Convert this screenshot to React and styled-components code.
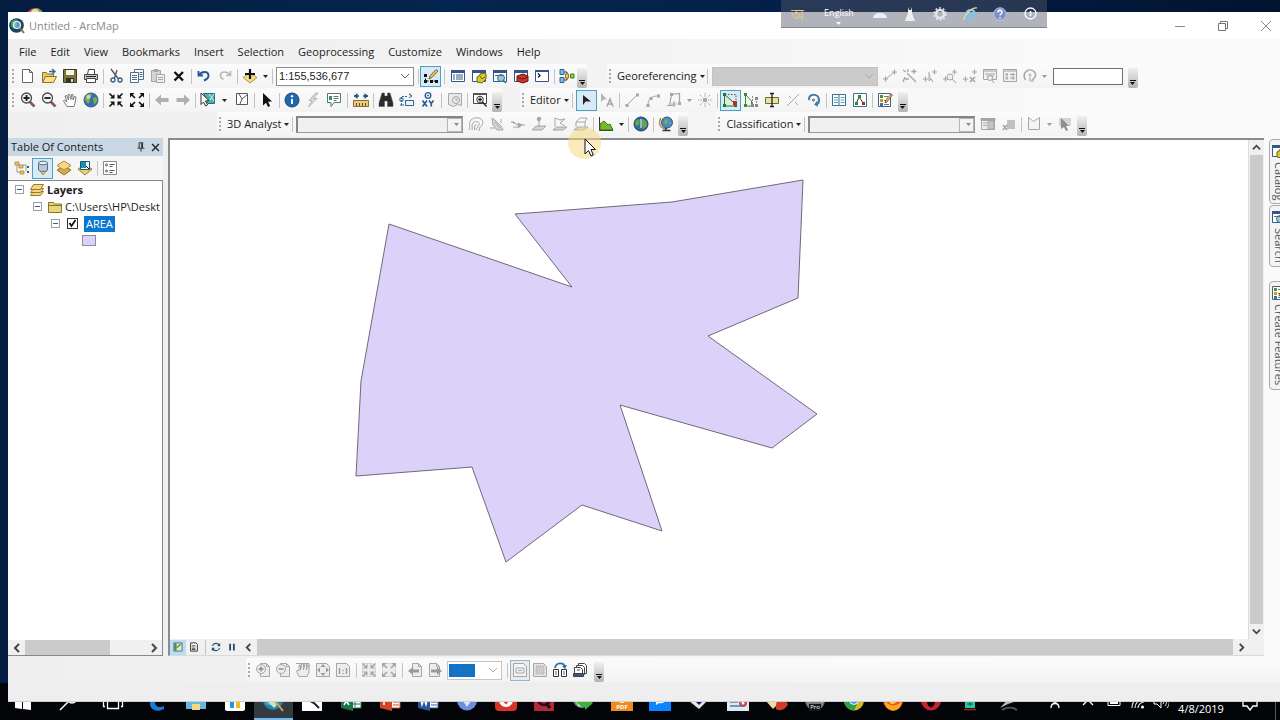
import React, { useState } from 'react';
import styled, { createGlobalStyle, css } from 'styled-components';

const GlobalStyle = createGlobalStyle`
    *, *::before, *::after {
        box-sizing: border-box;
    }

    body {
        margin: 0;
        overflow: hidden;
        font-family: "Open Sans", "Noto Sans", sans-serif;
        font-size: 11px;
        line-height: 16px;
        color: #1c1c1c;
    }

    button, select, input {
        font: inherit;
        color: inherit;
    }

    svg {
        display: block;
        flex: none;
    }
`;

/* ---------- icons ---------- */

const G = '#a6a6a6';
const L = '#d4d4d4';

const page = (c = '#666', fill = '#fff') => <path d="M2.5 1.5h7l3 3v10h-10zM9.5 1.5v3h3" fill={fill} stroke={c} />;
const grayPage = <path d="M5.5 1.5h6l3 3v10h-9zM11.5 1.5v3h3" fill="#ececec" stroke={G} />;
const arrowsIn = (c) => (
    <g stroke={c} fill={c} strokeWidth="1.6">
        <path d="M1.5 1.5l3 3M14.5 1.5l-3 3M1.5 14.5l3-3M14.5 14.5l-3-3" />
        <path d="M6.5 2V6.5H2zM9.5 2V6.5H14zM6.5 14V9.5H2zM9.5 14V9.5H14z" stroke="none" />
    </g>
);
const arrowsOut = (c) => (
    <g stroke={c} fill={c} strokeWidth="1.6">
        <path d="M6 6L3 3M10 6l3-3M6 10l-3 3M10 10l3 3" />
        <path d="M1 1h4.500L1 5.500zM15 1v4.500L10.500 1zM1 15v-4.500L5.500 15zM15 15h-4.500l4.500-4.500z" stroke="none" />
    </g>
);
const lens = (sign) => (
    <g fill="none">
        <path d="M9.500 9.500l5 5" stroke="#8a5850" strokeWidth="2.600" />
        <circle cx="6.500" cy="6" r="5" fill="#eef3f7" stroke="#4c4c4c" strokeWidth="1.300" />
        <path d={sign === '+' ? 'M6.500 3v6M3.500 6h6' : 'M3.500 6h6'} stroke="#222" strokeWidth="1.900" />
    </g>
);
const win = (c = '#35568c') => (
    <g>
        <path d="M1.500 2.500h13v11h-13z" fill="#fff" stroke={c} />
        <path d="M1 2h14v3H1z" fill={c} />
    </g>
);
const globe = (
    <g>
        <circle cx="8" cy="8" r="7" fill="#3470b0" stroke="#35587f" />
        <path d="M3 4c2-2 4-2.500 6-2l-1 3-2 1 1 3-2 3-2-3-1.500-1zM10 6l3-1 1.500 3-1.500 3-2 1.500z" fill="#7fae4e" />
        <circle cx="5.500" cy="5" r="2.200" fill="#fff" opacity=".55" />
    </g>
);
const plusMarks = (
    <path d="M1 11h5M3.500 8.500v5M10 4h5M12.500 1.500v5" stroke={G} strokeWidth="1.200" fill="none" />
);
const fence = (c = '#fff', s = '#9b7a2b') => <path d="M8 5l7 4-7 6-7-6z" fill={c} stroke={s} />;

const icons = {
    newDoc: page(),
    open: (
        <g>
            <path d="M1.500 14.500v-10h4l1 1.500h6v8z" fill="#e8c95f" stroke="#8f7426" />
            <path d="M1.500 14.500l3-6h11l-3 6z" fill="#f7e28c" stroke="#8f7426" />
            <path d="M8 3.500h5M11 1l3 2.500L11 6" stroke="#2e6aa0" fill="none" strokeWidth="1.400" />
        </g>
    ),
    save: (
        <g>
            <path d="M1.500 1.500h13v13h-13z" fill="#7d7436" stroke="#3b3a28" />
            <path d="M4 2h8v5H4z" fill="#f4f4ee" />
            <path d="M4 10h8v4.500H4z" fill="#33332b" />
            <path d="M9 11h2v3H9z" fill="#ddd" />
        </g>
    ),
    print: (
        <g stroke="#444">
            <path d="M4.500 6.500l1-5h6v5" fill="#fff" />
            <path d="M1.500 6.500h13v5h-13z" fill="#c9c9c9" />
            <path d="M3.500 10.500h9v4h-9z" fill="#fff" />
            <path d="M3 8.500h10" stroke="#222" />
        </g>
    ),
    cut: (
        <g fill="none" stroke="#555" strokeWidth="1.300">
            <path d="M3 1l7 9.500M9 2L6.500 10" />
            <circle cx="5" cy="12" r="2" stroke="#2f5d8e" />
            <circle cx="12" cy="12" r="2" stroke="#2f5d8e" />
        </g>
    ),
    copy: (
        <g fill="#fff" stroke="#4e6f8c">
            <path d="M5.500 1.500h9v10h-9z" />
            <path d="M1.500 4.500h8v10h-8z" />
            <path d="M3 7.500h5M3 9.500h5M3 11.500h5M10.500 4.500h3M10.500 6.500h3M10.500 8.500h3" />
        </g>
    ),
    paste: (
        <g stroke={G}>
            <path d="M1.500 2.500h9v11h-9z" fill={L} />
            <path d="M4 1.500h4v2H4z" fill={G} />
            <path d="M6.500 6.500h8v8h-8z" fill="#eee" />
            <path d="M8 9.500h5M8 11.500h5" />
        </g>
    ),
    remove: <path d="M3.500 4l8.500 8.500M12 4l-8.500 8.500" stroke="#111" strokeWidth="2.400" />,
    undo: <path d="M2.500 3v4.500H7M3 7c3-4 9-4 9.500 0 .3 2.500-2 4.500-4.500 5.500" fill="none" stroke="#235a94" strokeWidth="1.900" />,
    redo: <path d="M13.500 3v4.500H9M13 7c-3-4-9-4-9.500 0-.3 2 1 3.500 3 4.500" fill="none" stroke="#b9b9b9" strokeWidth="1.700" />,
    addData: (
        <g>
            <path d="M8 5l7 4.500-7 5.500-7-5.500z" fill="#f4dc86" stroke="#b5913a" />
            <path d="M8 1v10M3 6h10" stroke="#111" strokeWidth="2.200" />
        </g>
    ),
    editSnap: (
        <g>
            <path d="M2.500 7v6h11" stroke="#111" fill="none" strokeDasharray="2 1.500" />
            <path d="M1 6h3v3H1zM1 12h3v3H1zM7 12h3v3H7zM12 12h3v3h-3z" fill="#111" />
            <path d="M6 11l1-3 6-6.500L15 3 9 9.500z" fill="#ecc45c" stroke="#5b4718" strokeWidth=".8" />
        </g>
    ),
    toc: <g>{win()}<path d="M3 7h2M3 9h2M3 11h2M6 7h7M6 9h7M6 11h7" stroke="#35568c" /></g>,
    catalog: <g>{win()}<path d="M6 9l3-2v-1l4-1 2 1v5l-4 4-5-1z" fill="#dcc92e" stroke="#6b6212" /><path d="M9 8l2 3 3-2" stroke="#6b6212" /></g>,
    search: <g>{win()}<circle cx="9" cy="10" r="3.500" fill="#9fc6d8" stroke="#2e7594" /><path d="M3 7.500h9" stroke="#666" /><path d="M11 12l3 3" stroke="#2e7594" strokeWidth="1.500" /></g>,
    toolbox: <g>{win()}<path d="M4 8l6-2 5 2v5l-5 2-6-2z" fill="#c83628" stroke="#6d1610" /><path d="M4 9.500l6 1.500 5-2" stroke="#6d1610" fill="none" /></g>,
    python: <g><path d="M1.500 2.500h13v11h-13z" fill="#fff" stroke="#35568c" /><path d="M1 2h14v2H1z" fill="#35568c" /><path d="M4 5.500l2 2-2 2" stroke="#111" strokeWidth="1.200" fill="none" /></g>,
    model: (
        <g stroke="#333">
            <path d="M5 4h3v4h2M5 12h3V8" fill="none" />
            <path d="M1 1.500h4v5H1zM1 9.500h4v5H1z" fill="#7cbbe8" stroke="#2a6596" />
            <path d="M6.500 6h3v4h-3z" fill="#f4d23e" stroke="#8d7518" />
            <path d="M11.500 6h3.500v4h-3.500z" fill="#8fd05b" stroke="#3f7a1b" />
        </g>
    ),
    zoomIn: lens('+'),
    zoomOut: lens('-'),
    pan: <path d="M5 14.500L1.500 9l1-1L5 10 3 4l1.500-.5L6.500 8 6 2.500h1.500L9 7.500 9.500 2.500H11V8l1.500-3.500 1.500.5-1 6-1 3.500z" fill="#fff" stroke="#6d6d6d" strokeWidth=".9" />,
    globe,
    fixedIn: arrowsIn('#111'),
    fixedOut: arrowsOut('#111'),
    back: <path d="M1 8l6-5.500v3.500h7.500v4H7v3.500z" fill="#b0b0b0" />,
    forward: <path d="M15 8L9 2.500v3.500H1.500v4H9v3.500z" fill="#b0b0b0" />,
    selectFeatures: (
        <g>
            <path d="M3.500 1.500h11v10H8z" fill="#4bb3ad" stroke="#2b6a78" />
            <path d="M9 2l5 7M14 2l-4 6" stroke="#d9f2ef" />
            <path d="M1 1l8 7.500-3.500.5 2 4-2 1-2-4L1 12.500z" fill="#fff" stroke="#333" />
        </g>
    ),
    clearSel: <path d="M2.500 1.500h11v11h-11zM5 2l3 5-2 5M8 7l5-4" fill="#fff" stroke="#555" />,
    pointer: <path d="M4 1l9 8.500-4 .3 2.200 4.200-2.200 1-2-4.300L4 13.500z" fill="#111" />,
    identify: (
        <g>
            <circle cx="8" cy="8" r="7" fill="#1f66ae" stroke="#163f73" />
            <path d="M8 7v5" stroke="#fff" strokeWidth="2" />
            <circle cx="8" cy="4.300" r="1.200" fill="#fff" />
        </g>
    ),
    bolt: <path d="M10.500 1L4 8.500h3L3.500 15 12 6.500H8.500L13 1z" fill="#ddd" stroke={G} strokeWidth=".8" />,
    popup: (
        <g>
            <path d="M1.500 1.500h13v9H8l-3 4v-4H1.500z" fill="#fff" stroke="#57796c" />
            <path d="M3 4h3v4H3z" fill="#3d8a7c" />
            <path d="M7.500 4.500h5M7.500 6.500h5M7.500 8.500h3" stroke="#57796c" />
        </g>
    ),
    measure: (
        <g>
            <path d="M1 4h5M10 4h5" stroke="#1c4f86" strokeWidth="1.600" />
            <path d="M1 4l3.500-3v6zM15 4l-3.500-3v6z" fill="#1c4f86" />
            <path d="M.5 8.500h15v6H.5z" fill="#eccb86" stroke="#8f6c2f" />
            <path d="M3.500 14v-3M6.500 14v-3M9.500 14v-3M12.500 14v-3" stroke="#6b4c18" />
        </g>
    ),
    find: <path d="M4 1h2.500v3h3V1H12l3 10v3.500H9.500V9h-3v5.500H1V11zM3 10.500h2M11 10.500h2" fill="#2a2a2a" stroke="#555" strokeWidth=".5" />,
    route: (
        <g fill="none" stroke="#2b6a91">
            <path d="M2.500 13V4.500H8M11 1.500v3" strokeDasharray="2 1" />
            <path d="M10 2l3 2-3 2M1 6h3v3H1z" />
            <path d="M6.500 8.500h8v5h-8z" fill="#eaf3f8" />
            <path d="M1 13h4" />
        </g>
    ),
    xy: (
        <g fill="none" stroke="#1f5c93">
            <circle cx="8" cy="3.500" r="2.800" strokeWidth="1.300" />
            <circle cx="8" cy="3.500" r=".6" />
            <path d="M2.500 8.500l4.500 6M7 8.500l-4.500 6M9 8.500l2.300 3 2.200-3M11.300 11.500v3" strokeWidth="1.600" />
        </g>
    ),
    timeSlider: <g stroke={G} fill="#e8e8e8"><path d="M1.500 1.500h13v12l-4-1-4 2-5-2z" /><circle cx="9" cy="8" r="3.500" /><path d="M9 6v2h2" fill="none" /></g>,
    viewer: (
        <g>
            <path d="M1.500 1.500h13v10h-13z" fill="#fff" stroke="#444" />
            <path d="M1 1h14v2H1z" fill="#555" />
            <circle cx="8" cy="7.500" r="3.300" fill="#fff" stroke="#333" />
            <path d="M8 5.500v4M6 7.500h4M10.500 10l4 4.500" stroke="#222" strokeWidth="1.300" />
        </g>
    ),
    editTool: <path d="M5 3v10l2.500-3.500H13z" fill="#222" />,
    editAnno: <g><path d="M2 1v9l2.500-2.500H8z" fill="#b5b5b5" /><path d="M8 14.500L11 7l3 7.500M9 12h4" fill="none" stroke={G} strokeWidth="1.500" /></g>,
    line: <g stroke={G} fill={G}><path d="M3 13L13 3" /><path d="M1.500 12h3v3h-3zM12 1.500h3v3h-3z" stroke="none" /></g>,
    arc: <g stroke={G} fill="none"><path d="M3 13c0-6 4-9 9-9" /><path d="M1.500 12h3v3h-3zM4.500 5h3v3h-3zM12 2.500h3v3h-3z" fill={G} stroke="none" /></g>,
    trace: <g stroke={G} fill="none"><path d="M3.500 13.500l2-11 8-1v9M1 13.500h7M8 9v6M5 12h6" strokeWidth="1.200" /><path d="M12 10h3v3h-3zM4 1h3v3H4z" fill={G} stroke="none" /></g>,
    point: <g stroke={G}><path d="M8 1v4M8 11v4M1 8h4M11 8h4M3 3l2.500 2.500M13 3l-2.500 2.500M3 13l2.500-2.500M13 13l-2.500-2.500" strokeDasharray="1.500 .7" /><path d="M6.500 6.500h3v3h-3z" fill={G} /></g>,
    vertices: (
        <g>
            <path d="M2.500 3v11h11V12L3 3z" fill="#dcefdf" stroke="#2d6b35" />
            <path d="M3 2.500h11v9" fill="none" stroke="#555" strokeDasharray="1.500 1.500" />
            <path d="M1 1h3v3H1zM1 12h3v3H1zM12 12h3v3h-3z" fill="#1f7a2c" />
            <path d="M11 9h4v4h-4z" fill="#c5261d" />
        </g>
    ),
    reshape: (
        <g>
            <path d="M2.500 3v11h6V9L3 3" fill="none" stroke="#3b8b3f" />
            <path d="M9.500 4v10M13.500 6v8" stroke="#888" strokeDasharray="2 1" />
            <path d="M1 1h3v3H1zM1 12h3v3H1z" fill="#3b8b3f" />
            <path d="M8 12h3v3H8zM12 5h3v3h-3zM12 12h3v3h-3z" fill="#888" />
        </g>
    ),
    cutPoly: <g><path d="M1.500 5.500h13v6h-13z" fill="#eae59a" stroke="#6d6a33" /><path d="M8 1v14M6 1.500h4M6 14.500h4" stroke="#222" strokeWidth="1.300" /></g>,
    split: <path d="M2 14L14 2M4 4l2 2M10 10l3 3" stroke={G} fill="none" />,
    rotate: <g fill="none" stroke="#3f7fae"><path d="M3 8c-1-7 10-7 10 0 0 2-1 4-3 4.500" strokeWidth="2.200" /><path d="M11 9l-3 3.500 4 2.500" fill="#3f7fae" stroke="none" /><circle cx="7.500" cy="8" r="1" stroke="#555" /></g>,
    attributes: (
        <g fill="none" stroke="#3b7096">
            <path d="M1.500 2.500h13v11h-13z" fill="#fff" />
            <path d="M8 3v10" />
            <path d="M3 5.500h4M3 8h4M3 10.500h4M9.500 5.500h4M9.500 8h4M9.500 10.500h4" stroke="#5d9cc4" />
        </g>
    ),
    sketch: <g><path d="M1.500 1.500h13v13h-13z" fill="#fff" stroke="#3b7096" /><path d="M4 12l3-7 5 7" stroke="#333" fill="none" /><path d="M3 10h3v3H3zM6 3h3v3H6z" fill="#2c8a35" /><path d="M10 10h3v3h-3z" fill="#b5271d" /></g>,
    createFeatures: (
        <g>
            <path d="M1.500 1.500h12v13h-12z" fill="#fff" stroke="#43627c" />
            <path d="M3 3h3v3H3z" fill="#4f8f3a" /><path d="M3 7h3v3H3z" fill="#c99b25" /><path d="M3 11h3v3H3z" fill="#3a72a8" />
            <path d="M7 4.500h4M7 8.500h3M7 12.500h5" stroke="#777" />
            <path d="M8 11l1-3 5-6 1.500 1L10 10z" fill="#ecc45c" stroke="#4d3d18" strokeWidth=".7" />
        </g>
    ),
    contour: <g fill="none" stroke={G}><path d="M1 14C3 10 0 7 3 4s9-3 11 0 0 6-2 7l-1 4" /><path d="M4 14c1-3-1-5 1-7s5-2 6 0-2 4-3 7" /><path d="M6.500 14c0-3 0-5 2-6" /></g>,
    steepest: <g stroke={G} fill={L}><path d="M3 2l4 3 5 5 2 4H8L4 9z" /><path d="M6 6l5 6M1 12h5M12 3v4" fill="none" /></g>,
    sight: <g stroke={G} fill={G}><path d="M1 6h3l3 3M12 9l-4-2v5z" /><path d="M3 11h4M11 9h4" /></g>,
    interpPoint: <g stroke={G}><path d="M1 14l4-4h10l-4 4z" fill={L} /><path d="M8 4v7" /><circle cx="8" cy="3" r="1.800" fill={G} /></g>,
    interpLine: <g stroke={G} fill="none"><path d="M1 14l4-3h10l-4 3z" fill={L} /><path d="M3 11V2l5 2 5-1-5 4 5 3" /></g>,
    interpPoly: <g stroke={G} fill="none"><path d="M1 14l4-3h10l-4 3z" fill={L} /><path d="M3 11V6l4-4h7l-2 4H3M12 6v5" /></g>,
    profile: <g><path d="M1.500 1v13.500H15" stroke="#333" fill="none" /><path d="M2 14V8l4-3 4 4 2-1 3 6z" fill="#78b82f" stroke="#3d7314" /></g>,
    scene: <g><circle cx="8" cy="8" r="7" fill="#2f6d9e" stroke="#204060" /><path d="M4 3l3 2-1 4-3 1-1-3zM9 3l4 2 1 5-4 3-1-5z" fill="#62a844" /><path d="M8 3v9" stroke="#e8e8e8" strokeWidth="1.200" /></g>,
    arcGlobe: <g><path d="M3 2c-3 5-1 10 5 11" fill="none" stroke="#b38a2f" strokeWidth="1.500" /><circle cx="9" cy="6.500" r="5.500" fill="#4a8bc5" stroke="#295680" /><path d="M7 3l3 1-1 4-3-1zM11 6l2 1-1 3z" fill="#74b04f" /><path d="M8 12v2M4.500 14.500h8" stroke="#333" strokeWidth="1.500" /></g>,
    refAdd: <g>{plusMarks}<path d="M4 11l8-7" stroke={G} /></g>,
    refAuto: <g stroke={G} fill="none"><path d="M1 2l3 2M5 5l9 9M3 9l-2 5M6 1v3M12 1v5M9.500 3.500h5M3 11h4" strokeWidth="1.300" /></g>,
    refSelect: <g>{plusMarks}<path d="M7 4v9l2-2 2 3" stroke={G} fill={L} /></g>,
    refZoom: <g>{plusMarks}<circle cx="8" cy="9" r="3" fill="#eee" stroke={G} /><path d="M10 11l4 4" stroke={G} /></g>,
    refDelete: <g>{plusMarks}<path d="M8 9l5 5M13 9l-5 5" stroke={G} strokeWidth="1.700" /></g>,
    refView: <g stroke={G} fill="#f0f0f0"><path d="M1.500 1.500h13v10h-13z" /><path d="M1 3h14M3 6h10M5 8h7" /><circle cx="8" cy="10" r="2.500" /><path d="M10 12l2 3" /></g>,
    refTable: <g stroke={G} fill="#f0f0f0"><path d="M1.500 1.500h13v12h-13z" /><path d="M1 3h14M3 6.500h3M8 6.500h5M3 10h3M8 10h5M5 5v7M11 5v7" /></g>,
    refRotate: <g fill="none" stroke={G}><path d="M3.500 12C-1 4 8-1 12.500 4c3 4-1 7-2.500 8" strokeWidth="1.500" /><path d="M8 9v4h4" /><circle cx="8" cy="7" r="1" /></g>,
    classWin: <g stroke={G}><path d="M1.500 2.500h13v11h-13z" fill="#eee" /><path d="M1 2.500h14v2H1z" fill={G} /><path d="M8 5h6v8H8z" fill="#c4c4c4" /><path d="M3 7h4M3 9.500h4" /></g>,
    classHist: <g><path d="M6 4h8v9H6z" fill="#c0c0c0" /><path d="M2 9l4 5M6 9l-4 5" stroke={G} strokeWidth="1.500" /></g>,
    classPoly: <path d="M2.500 13.500v-12l5 4 6-4v12z" fill="#f4f4f4" stroke={G} />,
    classSelect: <g><path d="M2 2h12v8H2z" fill={L} /><path d="M4 2l8 8H9l2 4-2 1-2-4-3 2z" fill="#8d8d8d" /></g>,
    listOrder: (
        <g>
            <path d="M3 4v8h3M9 5h3v6" stroke="#999" fill="none" />
            <path d="M1 2h4v3H1zM5 5h4v3H5zM6 11h4v3H6z" fill="#efc468" stroke="#a67a28" strokeWidth=".7" />
            <path d="M13 6h2v2h-2zM13 11h2v2h-2z" fill="#2f5c91" />
        </g>
    ),
    listSource: (
        <g>
            <path d="M4 9l4 6 5-6z" fill="#eec866" stroke="#b08a34" />
            <path d="M3.500 3v7c1 2 8 2 9 0V3z" fill="#b9c7d6" stroke="#55708c" />
            <ellipse cx="8" cy="3" rx="4.500" ry="1.800" fill="#e9f0f6" stroke="#55708c" />
        </g>
    ),
    listVisible: <g><path d="M8 6l7 4-7 5-7-5z" fill="#dba940" stroke="#96701f" /><path d="M8 1l7 4.500-7 4.500-7-4.500z" fill="#f4d88b" stroke="#b08a34" /></g>,
    listSelected: <g>{fence('#efcd72')}<path d="M3.500 1.500h9v8h-9z" fill="#fff" stroke="#17597a" /><path d="M4 2h5v6H4z" fill="#1b93a5" /><path d="M9 6l3 3" stroke="#111" /></g>,
    options: <g stroke="#555" fill="none"><path d="M1.500 1.500h13v13h-13z" fill="#fff" stroke="#888" /><circle cx="4.500" cy="5" r="1" /><circle cx="4.500" cy="11" r="1" /><path d="M7.500 4.500h5M7.500 6.500h3M7.500 10.500h5M7.500 12.500h3" /></g>,
    layers: (
        <g fill="#f3d483" stroke="#9b7a2b">
            <path d="M1.500 13.500l3-4h10l-3 4z" />
            <path d="M1.500 10.500l3-4h10l-3 4z" />
            <path d="M1.500 7.500l3-5h10l-3 5z" />
        </g>
    ),
    folder: <path d="M1.500 13.500v-10h5l1 1.500h7v8.500zM2 6.500h12" fill="#e8d67a" stroke="#86762c" />,
    pageZoomIn: <g>{grayPage}<circle cx="6" cy="7" r="4.500" fill="#eee" stroke={G} /><path d="M6 4.500v5M3.500 7h5" stroke="#888" strokeWidth="1.400" /></g>,
    pageZoomOut: <g>{grayPage}<circle cx="6" cy="7" r="4.500" fill="#eee" stroke={G} /><path d="M3.500 7h5" stroke="#888" strokeWidth="1.400" /></g>,
    pagePan: <path d="M4 14.500L1.500 9 3 8l1 1V3h1.500v5L7 1.500h1.500V8L10 1.500l1.500.5V8l1-5H14v7l-2 4.500zM1 1.500h13v4" fill="#eee" stroke={G} />,
    pageWhole: <g><path d="M1.500 1.500h10l3 3v10h-13z" fill="#ececec" stroke={G} /><path d="M8 2l2.500 3h-5zM8 14l2.500-3h-5zM2 8l3-2.500v5zM14 8l-3-2.500v5z" fill="#999" /></g>,
    page100: <g><path d="M1.500 1.500h10l3 3v10h-13z" fill="#ececec" stroke={G} /><path d="M4.500 6v6M11.500 6v6M8 8v1M8 11v1" stroke="#999" strokeWidth="1.300" /></g>,
    pageIn: <g><path d="M1.500 1.500h10l3 3v10h-13z" fill="#ececec" stroke={L} />{arrowsIn(G)}</g>,
    pageOut: <g><path d="M1.500 1.500h10l3 3v10h-13z" fill="#ececec" stroke={L} />{arrowsOut(G)}</g>,
    pageBack: <g>{grayPage}<path d="M1 9l5-4v2.500h6v3H6V13z" fill="#9a9a9a" /></g>,
    pageForward: <g>{page(G, '#ececec')}<path d="M15 9l-5-4v2.500H4v3h6V13z" fill="#9a9a9a" /></g>,
    draft: <g stroke={G} fill="#f4f4f4"><path d="M1.500 1.500h10l3 3v10h-13z" /><path d="M4 6h8v5H4zM6 8.500h4" /></g>,
    focus: <g stroke={G} fill="#e4e4e4"><path d="M1.500 1.500h10l3 3v10h-13z" /><path d="M4 4h8v8H4z" strokeDasharray="1 1" fill="#ccc" /></g>,
    changeLayout: (
        <g>
            <path d="M3 6c1-6 9-6 10-1" fill="none" stroke="#2d6fa5" strokeWidth="1.700" />
            <path d="M15 3l-2 4-3-3z" fill="#2d6fa5" />
            <path d="M1.500 7.500h5v7h-5zM9.500 7.500h5v7h-5z" fill="#fff" stroke="#333" />
            <path d="M3 10h2M3 12h2M11 10h2M11 12h2" stroke="#2d6fa5" />
        </g>
    ),
    dataDriven: (
        <g fill="#fff" stroke="#444">
            <path d="M6.500 1.500h6l2 2v8h-8z" />
            <path d="M4.500 3.500h6l2 2v7h-8z" />
            <path d="M2.500 5.500h6l2 2v5h-8z" />
            <path d="M1.500 11.500h10v3h-10z" fill="#3a5572" />
            <path d="M5 8h3" />
        </g>
    ),
    dataView: <g><path d="M2.500 2.500h11v11h-11z" fill="#d7eeb0" stroke="#35528a" /><path d="M3 3h3v10H3z" fill="#4a8b52" /><path d="M6 9l6-5" stroke="#4a8b52" strokeWidth="1.500" /></g>,
    layoutView: <path d="M3.500 2.500h7l2 2v9h-9zM5 6.500h5M5 9.500h5M5 11.500h5" fill="#fff" stroke="#333" strokeWidth="1.300" />,
    refresh: <g fill="none" stroke="#1f4e66" strokeWidth="1.600"><path d="M3 6.500C5 2 11 2 12.500 6M13 9.500c-2 4.500-8 4.500-9.500.5" /><path d="M13.500 2.500V7H9.500zM2.500 13.500V9h4z" fill="#1f4e66" stroke="none" /></g>,
    pause: <path d="M5.500 3.500v9M10.500 3.500v9" stroke="#26466d" strokeWidth="2.400" />,
    arcmap: (
        <g>
            <circle cx="7.500" cy="7.500" r="7.300" fill="#134568" />
            <path d="M2 4c2-3 6-3 7-2L7 5l1 3-3 3-3-3z" fill="#4f9f6b" />
            <circle cx="8" cy="7" r="3.500" fill="#9fd0dd" fillOpacity=".6" stroke="#e9f4f7" strokeWidth="1.200" />
            <path d="M11 10l4 5" stroke="#8a6a3a" strokeWidth="2" />
        </g>
    ),
    pin: <path d="M5 2.500h6M5.500 3v6M10 3v6M9 3v6M3.500 9.500h9M8 10v4" stroke="#222" strokeWidth="1.300" fill="none" />,
    close: <path d="M3 3l10 10M13 3l-10 10" stroke="#222" strokeWidth="2" />,
};

const Glyph = ({ name, size = 16 }) => (
    <svg width={size} height={size} viewBox="0 0 16 16" fill="none" aria-hidden="true">{icons[name]}</svg>
);

const Chevron = ({ dir = 'down', color = '#444', size = 10, weight = 2 }) => {
    const paths = {
        down: 'M1 3l4 4 4-4',
        up: 'M1 7l4-4 4 4',
        left: 'M7 1L3 5l4 4',
        right: 'M3 1l4 4-4 4',
    };
    return (
        <svg width={size} height={size} viewBox="0 0 10 10" fill="none" aria-hidden="true">
            <path d={paths[dir]} stroke={color} strokeWidth={weight} />
        </svg>
    );
};

const Caret = ({ color = '#222' }) => (
    <svg width="5" height="3" viewBox="0 0 5 3" aria-hidden="true"><path d="M0 0h5L2.500 3z" fill={color} /></svg>
);

/* ---------- window frame ---------- */

const Desktop = styled.div`
    display: flex;
    flex-direction: column;
    height: 100vh;
    background: linear-gradient(90deg, #041c40, #04254f 35%, #04204a 60%, #021330);
    overflow: hidden;
    position: relative;
`;

const DesktopShortcut = styled.svg`
    position: absolute;
    left: 26px;
    top: 8px;
`;

const AppWindow = styled.div`
    flex: 1;
    min-height: 0;
    display: flex;
    flex-direction: column;
    margin: 12px 0 -19px 8px;
    background: linear-gradient(90deg, #efefef, #f2f2f2 40%, #fafafa 85%);
    position: relative;
    z-index: 1;
`;

const TitleBar = styled.header`
    display: flex;
    align-items: center;
    height: 27px;
    padding: 0 0 0 1px;
    background: #fff;
    color: #8a8a8a;
`;

const WindowTitle = styled.h1`
    flex: 1;
    margin: 0;
    padding-left: 4px;
    font-size: 11px;
    font-weight: 400;
`;

const WindowButton = styled.button`
    display: grid;
    place-items: center;
    width: 43px;
    height: 26px;
    padding: 0;
    border: 0;
    background: none;

    &:last-child {
        width: 36px;
        padding-left: 8px;
    }
`;

const MenuBar = styled.nav`
    display: flex;
    align-items: center;
    height: 25px;
    padding-left: 4px;
`;

const MenuButton = styled.button`
    padding: 0 7px;
    border: 0;
    background: none;
    white-space: nowrap;
`;

/* ---------- toolbars ---------- */

const ToolbarArea = styled.div`
    padding-bottom: 2px;
`;

const ToolbarRow = styled.div`
    display: flex;
    align-items: center;
    height: 24px;
    padding-left: ${({ $indent }) => $indent || 2}px;
    gap: ${({ $gap }) => $gap || 20}px;
`;

const Grip = styled.span`
    width: 3px;
    height: 15px;
    margin: 0 2px;
    background: repeating-linear-gradient(#a8a8a8 0 2px, transparent 2px 4px);
    background-size: 2px 100%;
    background-repeat: no-repeat;
`;

const ToolButton = styled.button`
    display: grid;
    place-items: center;
    flex: none;
    width: 21px;
    height: 21px;
    padding: 0;
    border: 1px solid transparent;
    background: none;

    ${({ $active }) => $active && css`
        border-color: #4ba0c4;
        background: #d7eaf5;
    `}

    ${({ $muted }) => $muted && css`
        border-color: #9fb4c0;
        background: #e6edf1;
    `}
`;

const ToolbarStrip = styled.div`
    display: flex;
    align-items: center;
    height: 24px;
    flex: none;
    background: linear-gradient(#fbfbfb, #f3f3f3);
    border-radius: 2px;

    ${({ $dense }) => $dense && css`
        ${ToolButton} {
            width: 20px;
        }
    `}
`;

const CaretButton = styled.button`
    display: grid;
    place-items: center;
    width: ${({ $wide }) => ($wide ? 13 : 10)}px;
    height: 20px;
    padding: 0;
    border: 0;
    background: none;
`;

const Separator = styled.span`
    width: ${({ $wide }) => ($wide ? 6 : 4)}px;
    height: 15px;
    background: linear-gradient(#c4c4c4, #c4c4c4) center / 1px 100% no-repeat;
`;

const ToolMenu = styled.button`
    display: flex;
    align-items: center;
    gap: 3px;
    padding: 0 1px 0 3px;
    border: 0;
    background: none;
    white-space: nowrap;
`;

const OverflowButton = styled.button`
    align-self: flex-end;
    display: grid;
    justify-items: center;
    align-content: end;
    gap: 1px;
    width: 10px;
    height: 20px;
    margin-left: ${({ $space }) => $space || 0}px;
    padding: 0 0 3px;
    border: 0;
    border-radius: 0 0 2px 2px;
    background: linear-gradient(#f0f0f0, #b4b4b4);

    &::before {
        content: "";
        width: 6px;
        height: 1px;
        background: #111;
    }
`;

const ComboBox = styled.span`
    display: grid;
    grid-template-columns: 1fr auto;
    align-items: center;
    flex: none;
    width: ${({ $width }) => $width}px;
    height: 19px;
    margin: 0 2px;
    padding-right: 3px;
    border: 1px solid ${({ $line }) => $line || '#8d8d8d'};
    background: ${({ $fill }) => $fill || '#fff'};

    select {
        grid-area: 1 / 1 / 2 / 3;
        appearance: none;
        width: 100%;
        height: 17px;
        padding: 0 2px;
        border: 0;
        background: none;
        font-family: "Liberation Sans", Arial, sans-serif;
        line-height: 14px;
    }

    svg {
        grid-area: 1 / 2;
        pointer-events: none;
    }
`;

const ZoomCombo = styled(ComboBox)`
    select {
        width: 26px;
        height: 13px;
        margin-left: 1px;
        background: #0a74cc;
        color: #3a6ea8;
    }
`;

const SunkenCombo = styled(ComboBox)`
    height: 17px;
    padding-right: 0;
    border: 1px solid #9a9a9a;
    border-top: 2px solid #858585;
    border-left: 2px solid #858585;
    background: #f0f0f0;

    select {
        height: 14px;
    }
`;

const DropBox = styled.span`
    grid-area: 1 / 2;
    display: grid;
    place-items: center;
    width: 15px;
    height: 14px;
    border: 1px solid #b5b5b5;
    background: #f4f4f4;
    pointer-events: none;
`;

const AngleInput = styled.input`
    width: 70px;
    height: 17px;
    margin: 0 3px;
    border: 1px solid #6f6f6f;
    background: #fff;
`;

/* ---------- body ---------- */

const Workspace = styled.main`
    flex: 1;
    min-height: 0;
    display: flex;
    gap: 5px;
`;

const ContentsPanel = styled.section`
    display: flex;
    flex-direction: column;
    width: 155px;
    flex: none;
`;

const PanelHeader = styled.div`
    display: flex;
    align-items: center;
    height: 18px;
    padding: 0 1px 0 3px;
    background: #c9d6e3;

    h2 {
        flex: 1;
        margin: 0;
        font-size: 11px;
        font-weight: 400;
        white-space: nowrap;
    }
`;

const HeaderButton = styled.button`
    display: grid;
    place-items: center;
    width: 14px;
    height: 16px;
    padding: 0;
    border: 0;
    background: none;
`;

const PanelTools = styled.div`
    display: flex;
    align-items: center;
    height: 24px;
    padding-left: 3px;
    background: #f5f5f5;
`;

const TreeBox = styled.div`
    flex: 1;
    min-height: 0;
    display: flex;
    flex-direction: column;
    border: 1px solid #85898f;
    border-left: 0;
    background: #fff;
`;

const Tree = styled.div`
    flex: 1;
    padding-left: 7px;
    overflow: hidden;
`;

const TreeRow = styled.div`
    display: flex;
    align-items: center;
    height: 17px;
    padding-left: ${({ $level }) => $level * 18}px;
    white-space: nowrap;
`;

const Expander = styled.button`
    flex: none;
    width: 9px;
    height: 9px;
    margin-right: 5px;
    padding: 0;
    border: 1px solid #a0a0a0;
    background: linear-gradient(#3c5a8a, #3c5a8a) center / 5px 1px no-repeat #fff;
`;

const TreeText = styled.span`
    padding-left: 2px;
    font-weight: ${({ $bold }) => ($bold ? 700 : 400)};
`;

const LayerCheck = styled.span`
    display: grid;
    margin: 0 6px 0 2px;

    input {
        grid-area: 1 / 1;
        appearance: none;
        width: 11px;
        height: 11px;
        margin: 0;
        border: 1px solid #333;
        background: #fff;
    }

    svg {
        grid-area: 1 / 1;
        pointer-events: none;
        visibility: ${({ $on }) => ($on ? 'visible' : 'hidden')};
    }
`;

const LayerLabel = styled.label`
    padding: 0 2px;
    background: #0a78d0;
    color: #fff;
`;

const Swatch = styled.span`
    width: 14px;
    height: 11px;
    margin-left: 13px;
    border: 1px solid #8f8aa0;
    background: #dcd1f8;
`;

const ScrollRow = styled.div`
    display: flex;
    align-items: center;
    height: 15px;
    flex: none;
    background: #f0f0f0;
`;

const ScrollButton = styled.button`
    display: grid;
    place-items: center;
    flex: none;
    width: 17px;
    height: 15px;
    padding: 0;
    border: 0;
    background: none;
`;

const ScrollTrack = styled.div`
    flex: 1;
    align-self: stretch;
    display: flex;
`;

const ScrollThumb = styled.div`
    flex: 0 0 ${({ $part }) => $part}%;
    background: #cbcbcb;
`;

const MapPanel = styled.section`
    flex: 1;
    min-width: 0;
    display: grid;
    grid-template-columns: 1fr 15px;
    grid-template-rows: 1fr 16px;
    border-top: 2px solid #8b8b8b;
    border-left: 2px solid #8b8b8b;
    border-bottom: 1px solid #dadada;
`;

const MapCanvas = styled.div`
    min-height: 0;
    overflow: hidden;
    background: #fff;
    border-right: 1px solid #ddd;
`;

const VerticalScroll = styled.div`
    display: flex;
    flex-direction: column;
    padding: 0 1px;
    background: #f0f0f0;

    ${ScrollButton} {
        width: 13px;
    }
`;

const MapFooter = styled(ScrollRow)`
    grid-column: 1 / 3;
    height: 16px;
    padding-right: 14px;
`;

const ViewButton = styled.button`
    display: grid;
    place-items: center;
    width: 16px;
    height: 15px;
    padding: 0;
    border: 0;
    background: ${({ $active }) => ($active ? '#bddcf4' : 'transparent')};
`;

const SideDock = styled.aside`
    flex: none;
    width: 11px;
    overflow: hidden;
    padding-top: 1px;
`;

const SideTab = styled.button`
    display: flex;
    align-items: center;
    gap: 3px;
    writing-mode: vertical-rl;
    width: 20px;
    padding: 3px 0;
    margin-bottom: ${({ $space }) => $space || 1}px;
    border: 1px solid #a9a9a9;
    border-radius: 4px;
    background: #f4f4f4;
    color: #555;
    white-space: nowrap;
`;

const BottomArea = styled.footer`
    height: 46px;
    flex: none;
    padding: 2px 0 0 238px;
    border-bottom: 1px solid #cfcfcf;
    background: linear-gradient(transparent 25px, #eeeeee 27px);
`;

/* ---------- overlays ---------- */

const LanguageBar = styled.div`
    position: absolute;
    z-index: 3;
    top: 0;
    right: 233px;
    display: flex;
    align-items: center;
    width: 266px;
    height: 28px;
    border-bottom: 1px solid #82858c;
    background: rgba(86, 90, 106, 0.46);
    color: #fff;
`;

const LanguageItem = styled.button`
    display: grid;
    justify-items: center;
    place-content: center;
    gap: 4px;
    width: ${({ $wide }) => ($wide ? 52 : 30)}px;
    padding: 0;
    border: 0;
    background: none;
    color: ${({ $gold }) => ($gold ? '#e8c98a' : '#fff')};
    font-size: ${({ $gold }) => ($gold ? 15 : 9)}px;
    line-height: 10px;

    ${({ $wide }) => $wide && css`
        padding-top: 6px;
    `}

    &:first-child {
        width: 32px;
    }
`;

const ClickHalo = styled.span`
    position: absolute;
    z-index: 3;
    left: 568px;
    top: 127px;
    width: 33px;
    height: 32px;
    border-radius: 50%;
    background: rgba(246, 219, 130, 0.55);
`;

const MouseCursor = styled.svg`
    position: absolute;
    z-index: 4;
    left: 584px;
    top: 138px;
`;

/* ---------- taskbar ---------- */

const Taskbar = styled.footer`
    display: flex;
    align-items: stretch;
    height: 37px;
    flex: none;
    background: #030407;
    color: #fff;
`;

const TaskItem = styled.button`
    display: grid;
    place-items: center;
    flex: ${({ $system }) => ($system ? '0 0 45px' : '1 1 0')};
    min-width: 0;
    padding: 0;
    border: 0;
    border-bottom: 2px solid ${({ $open }) => ($open ? '#76b9ed' : 'transparent')};
    background: ${({ $open }) => ($open ? '#333a40' : 'none')};
`;

const TaskList = styled.div`
    display: flex;
    flex: 1;
    min-width: 0;
    padding-left: 3px;
`;

const Tray = styled.div`
    display: flex;
    flex: none;
    width: 252px;
    padding-left: 9px;
`;

const TrayItem = styled.button`
    display: grid;
    place-items: center;
    width: ${({ $width }) => $width || 23}px;
    padding: 0;
    border: 0;
    background: none;
`;

const Clock = styled.time`
    align-self: flex-end;
    width: 58px;
    padding-bottom: 3px;
    text-align: center;
    line-height: 16px;
`;

const ShowDesktop = styled.button`
    width: 5px;
    margin-left: auto;
    padding: 0;
    border: 0;
    border-left: 1px solid #5a5a5a;
    background: none;
`;

const tile = (color, inner) => <g><path d="M1 0h20v21H1z" fill={color} />{inner}</g>;
const ball = (color, inner) => <g><circle cx="11" cy="10.500" r="10" fill={color} />{inner}</g>;

const taskIcons = {
    start: <path d="M3 5l7-1v7H3zM11 4l8-1v8h-8zM3 12h7v7l-7-1zM11 12h8v8l-8-1z" fill="#fff" />,
    find: <path d="M3 20l8-8M10 8a5 5 0 1 0 10 0a5 5 0 1 0-10 0" stroke="#fff" fill="none" strokeWidth="1.500" />,
    views: <path d="M5.500 3.500h11v15h-11zM3 6.500H1.500v10H3M19 6.500h1.500v10H19" stroke="#fff" fill="none" strokeWidth="1.300" />,
    edge: <path d="M3 10c2-10 17-9 16 2H9c0 5 5 6 9 4v3C11 23 3 20 4 12c1-3 4-4 6-5-4 0-6 2-7 3z" fill="#1a78d6" />,
    explorer: <g><path d="M1 2h20v17H1z" fill="#f3d783" /><path d="M1 9h20v10H1z" fill="#63b9e6" /><path d="M7 14h8v6H7z" fill="#f3d783" /></g>,
    store: <g><path d="M1 3h20v17l-2 1H3l-2-1z" fill="#fff" /><path d="M6 5h4v5H6z" fill="#e24b2c" /><path d="M12 5h4v5h-4z" fill="#7db928" /><path d="M6 12h4v6H6z" fill="#1b9be0" /><path d="M12 12h4v6h-4z" fill="#f6b81c" /></g>,
    arcmap: <g><circle cx="11" cy="10" r="10" fill="#1c86a8" /><path d="M3 14l9-9 5 3-4 8z" fill="#57a8b5" /><path d="M7 6l8 9-3 3-7-7z" fill="#cfe3c4" /><path d="M14 12l7 9" stroke="#d4a04a" strokeWidth="2" /></g>,
    sketchApp: tile('#fff', <path d="M2 7l11 6 5 5" stroke="#222" strokeWidth="2" fill="none" />),
    excel: <g><path d="M11 4h10v14H11z" fill="#fff" stroke="#1f7246" /><path d="M1 3l12-2v20L1 18z" fill="#1f7246" /><path d="M4 7l5 8M9 7l-5 8" stroke="#fff" strokeWidth="1.500" /><path d="M15 6v11M13 10h7M13 14h7" stroke="#1f7246" /></g>,
    powerpoint: <g><path d="M11 4h10v14H11z" fill="#fff" stroke="#d24625" /><path d="M1 3l12-2v20L1 18z" fill="#d24625" /><path d="M5 15V7h4v4H5" stroke="#fff" fill="none" strokeWidth="1.500" /><path d="M14 12h6M14 15h6" stroke="#d24625" /></g>,
    word: <g><path d="M11 4h10v14H11z" fill="#fff" stroke="#2a5699" /><path d="M1 3l12-2v20L1 18z" fill="#2a5699" /><path d="M3 7l2 8 2-6 2 6 2-8" stroke="#fff" fill="none" strokeWidth="1.300" /><path d="M14 9h6M14 12h6M14 15h6" stroke="#2a5699" /></g>,
    blueBall: ball('#6d8ddf', <path d="M5 8h12l-6 9z" fill="#dce6ff" />),
    redBall: <g><rect x="0" y="0" width="22" height="21" rx="4" fill="#d93229" /><circle cx="11" cy="10" r="7" fill="#fff" /><path d="M7 9l4 4 5-6" stroke="#d93229" strokeWidth="2" fill="none" /></g>,
    maroon: tile('#b02a3c', <g><circle cx="11" cy="9" r="6" fill="none" stroke="#250b10" strokeWidth="2.500" /><path d="M13 13l4 5" stroke="#250b10" strokeWidth="3" /></g>),
    idm: <g><circle cx="10" cy="9" r="9" fill="#4d9bd1" /><path d="M1 9c5 4 9 4 12 1v-3l8 6-8 7v-4c-5 1-10-2-12-7z" fill="#3fb234" /><path d="M3 11l6 5-2 1z" fill="#f0df4d" /></g>,
    pdf: <g><path d="M0 0h22v21H0z" fill="#ef8a1f" /><circle cx="11" cy="8" r="5" fill="#fff" /><circle cx="11" cy="8" r="2" fill="#ef8a1f" /><text x="11" y="19" fontSize="6" fontWeight="700" textAnchor="middle" fill="#fff">PDF</text></g>,
    messenger: <g><path d="M0 0h22v21H0z" fill="#0b84ff" /><path d="M5 8c0-8 12-8 12 0 0 5-5 6-7 5l-3 2v-3c-1-1-2-2-2-4z" fill="#fff" /></g>,
    pen: <g><path d="M1 11l10 8 9-9-4-6H6z" fill="#e5e5ef" /><path d="M5 9l6 6 6-6-5-5z" fill="#15156b" /></g>,
    card: <g><path d="M0 1h22v20H0z" fill="#dfe9f0" /><circle cx="16" cy="13" r="4" fill="#d94242" /><circle cx="16" cy="13" r="1.500" fill="#fff" /><path d="M3 12h8M3 16h14" stroke="#4c7ba7" strokeWidth="1.500" /></g>,
    ccleaner: <g><path d="M0 11l9-8 5 9-7 7z" fill="#f0d8a8" /><path d="M10 14c2-5 9-4 12 0-2 5-8 8-12 5z" fill="#d33a23" /></g>,
    proApp: ball('#77797d', <g><path d="M3 12c4-6 11-6 16 0" stroke="#ddd" strokeWidth="3" fill="none" /><path d="M5 14h12v7H5z" fill="#15161a" /><text x="11" y="19" fontSize="6" textAnchor="middle" fill="#fff">Pro</text></g>),
    chrome: <g><circle cx="11" cy="10.500" r="10" fill="#ddb71e" /><path d="M2 6c-3 8 2 14 9 14.500l4-8H7z" fill="#2ba24c" /><path d="M2 6C6-2 17-2 20 6z" fill="#dd4535" /><circle cx="11" cy="10" r="4.800" fill="#fff" /><circle cx="11" cy="10" r="3.800" fill="#4a8af4" /></g>,
    firefox: ball('#e8532b', <g><path d="M2 8c3 9 14 10 18 2 0 14-18 15-18-2z" fill="#f9a91f" /><circle cx="11" cy="8" r="5" fill="#5a3b96" /><path d="M6 9c3 4 6 2 9 1-1 5-8 6-9-1z" fill="#ffcf3c" /></g>),
    opera: <path d="M1 10.500a10 10 0 1 0 20 0a10 10 0 1 0-20 0M7 10.500c0-9 8-9 8 0s-8 9-8 0" fill="#c5242f" fillRule="evenodd" />,
    phone: <g><path d="M6 3h10v15H6z" fill="#24c9a6" /><path d="M8 11h6M8 14h6M11 5v11" stroke="#0b5b50" /><path d="M5 19.500h12" stroke="#a12828" strokeWidth="1.500" /></g>,
    wing: <g><path d="M2 18L14 5l5 6-9 3z" fill="#bcbcbc" /><path d="M4 20c5-3 11-3 15 0" stroke="#555" strokeWidth="2" fill="none" /></g>,
};

const TaskGlyph = ({ name }) => (
    <svg width="22" height="22" viewBox="0 0 22 22" aria-hidden="true">{taskIcons[name]}</svg>
);

const taskApps = [
    'edge', 'explorer', 'store', 'arcmap', 'sketchApp', 'excel', 'powerpoint', 'word', 'blueBall', 'redBall', 'maroon', 'idm',
    'pdf', 'messenger', 'pen', 'card', 'ccleaner', 'proApp', 'chrome', 'firefox', 'opera', 'phone', 'wing',
];

const menus = ['File', 'Edit', 'View', 'Bookmarks', 'Insert', 'Selection', 'Geoprocessing', 'Customize', 'Windows', 'Help'];

/* '|' is a separator and 'v' a small drop arrow, doubled for the wide ones; 'vg' is a disabled arrow */
const Tools = ({ items, active, muted }) => items.map((name, i) => {
    const key = `${name}-${i}`;
    if (name === '|' || name === '||') {
        return <Separator key={key} $wide={name === '||'} />;
    }
    if (name === 'v' || name === 'vv' || name === 'vg') {
        return (
            <CaretButton key={key} aria-label="More" $wide={name === 'vv'}>
                <Caret color={name === 'vg' ? '#999' : '#222'} />
            </CaretButton>
        );
    }
    return (
        <ToolButton key={key} aria-label={name} $active={name === active} $muted={name === muted}>
            <Glyph name={name} />
        </ToolButton>
    );
});

const Overflow = ({ space }) => (
    <OverflowButton aria-label="Toolbar options" $space={space}><Caret color="#111" /></OverflowButton>
);

const MenuDrop = ({ children }) => (
    <ToolMenu>{children}<Caret /></ToolMenu>
);

const LayerCombo = ({ label }) => (
    <SunkenCombo $width={167}>
        <select aria-label={label} />
        <DropBox><Caret color="#8a8a8a" /></DropBox>
    </SunkenCombo>
);

const Toolbars = () => (
    <ToolbarArea>
        <ToolbarRow>
            <ToolbarStrip>
                <Grip />
                <Tools items={['newDoc', 'open', 'save', 'print', '|', 'cut', 'copy', 'paste', 'remove', '|', 'undo', 'redo', '|', 'addData', 'v', '|']} />
                <ComboBox $width={138}>
                    <select aria-label="Map scale" defaultValue="1:155,536,677">
                        <option>1:155,536,677</option>
                    </select>
                    <Chevron color="#555" weight={1} />
                </ComboBox>
                <Tools
                    items={['|', 'editSnap', '||', 'toc', 'catalog', 'search', 'toolbox', 'python', '|', 'model']}
                    active="editSnap"
                />
                <Overflow />
            </ToolbarStrip>
            <ToolbarStrip $dense>
                <Grip />
                <MenuDrop>Georeferencing</MenuDrop>
                <Separator />
                <ComboBox $width={166} $fill="#cbcbcb" $line="#c2c2c2">
                    <select aria-label="Georeferencing layer" />
                    <Chevron color="#aaa" weight={1} />
                </ComboBox>
                <Tools items={['refAdd', 'refAuto', 'refSelect', 'refZoom', 'refDelete', 'refView', 'refTable', 'refRotate', 'vg']} />
                <AngleInput aria-label="Rotation" />
                <Overflow space={2} />
            </ToolbarStrip>
        </ToolbarRow>
        <ToolbarRow $gap={18}>
            <ToolbarStrip>
                <Grip />
                <Tools
                    items={['zoomIn', 'zoomOut', 'pan', 'globe', '|', 'fixedIn', 'fixedOut', '|', 'back', 'forward', '|',
                        'selectFeatures', 'vv', 'clearSel', '|', 'pointer', '|', 'identify', 'bolt', 'popup', '||', 'measure', '|',
                        'find', 'route', 'xy', '||', 'timeSlider', '|', 'viewer']}
                />
                <Overflow space={2} />
            </ToolbarStrip>
            <ToolbarStrip>
                <Grip />
                <MenuDrop>Editor</MenuDrop>
                <Separator $wide />
                <Tools
                    items={['editTool', 'editAnno', '|', 'line', 'arc', 'trace', 'vg', 'point', '|']}
                    active="editTool"
                />
                <Tools
                    items={['vertices', 'reshape', 'cutPoly', 'split', 'rotate', '|', 'attributes', 'sketch', '|', 'createFeatures']}
                    active="vertices"
                />
                <Overflow space={2} />
            </ToolbarStrip>
        </ToolbarRow>
        <ToolbarRow $indent={209} $gap={28}>
            <ToolbarStrip>
                <Grip />
                <MenuDrop>3D Analyst</MenuDrop>
                <Separator />
                <LayerCombo label="Surface layer" />
                <Tools
                    items={['contour', 'steepest', 'sight', 'interpPoint', 'interpLine', 'interpPoly', '|', 'profile', 'v', '|', 'scene', '|', 'arcGlobe']}
                />
                <Overflow space={2} />
            </ToolbarStrip>
            <ToolbarStrip>
                <Grip />
                <MenuDrop>Classification</MenuDrop>
                <Separator />
                <LayerCombo label="Classification layer" />
                <Tools items={['classWin', 'classHist', '|', 'classPoly', 'vg', 'classSelect']} />
                <Overflow space={2} />
            </ToolbarStrip>
        </ToolbarRow>
    </ToolbarArea>
);

const TableOfContents = () => {
    const [visible, setVisible] = useState(true);

    return (
        <ContentsPanel>
            <PanelHeader>
                <h2>Table Of Contents</h2>
                <HeaderButton aria-label="Auto hide"><Glyph name="pin" size={12} /></HeaderButton>
                <HeaderButton aria-label="Close"><Glyph name="close" size={11} /></HeaderButton>
            </PanelHeader>
            <PanelTools>
                <Tools
                    items={['listOrder', 'listSource', 'listVisible', 'listSelected', '|', 'options']}
                    active="listSource"
                />
            </PanelTools>
            <TreeBox>
                <Tree>
                    <TreeRow $level={0}>
                        <Expander aria-label="Collapse layers" />
                        <Glyph name="layers" />
                        <TreeText $bold>Layers</TreeText>
                    </TreeRow>
                    <TreeRow $level={1}>
                        <Expander aria-label="Collapse folder" />
                        <Glyph name="folder" />
                        <TreeText>C:\Users\HP\Deskt</TreeText>
                    </TreeRow>
                    <TreeRow $level={2}>
                        <Expander aria-label="Collapse layer" />
                        <LayerCheck $on={visible}>
                            <input id="layer-area" type="checkbox" checked={visible} onChange={() => setVisible(!visible)} />
                            <svg width="11" height="11" viewBox="0 0 11 11"><path d="M2.500 5l2 3 4-6" fill="none" stroke="#111" strokeWidth="1.800" /></svg>
                        </LayerCheck>
                        <LayerLabel htmlFor="layer-area">AREA</LayerLabel>
                    </TreeRow>
                    <TreeRow $level={3}>
                        <Swatch />
                    </TreeRow>
                </Tree>
                <ScrollRow>
                    <ScrollButton aria-label="Scroll left"><Chevron dir="left" /></ScrollButton>
                    <ScrollTrack><ScrollThumb $part={71} /></ScrollTrack>
                    <ScrollButton aria-label="Scroll right"><Chevron dir="right" /></ScrollButton>
                </ScrollRow>
            </TreeBox>
        </ContentsPanel>
    );
};

const MapView = () => (
    <MapPanel>
        <MapCanvas>
            <svg width="100%" height="100%" role="img" aria-label="AREA">
                <polygon
                    points="345,74 502,62 633,40 628,158 538,196 647,274 602,308 450,265 492,391 412,365 336,422 302,327 186,336 191,241 219,84 402,147"
                    fill="#dcd1f8"
                    stroke="#6e6a78"
                />
            </svg>
        </MapCanvas>
        <VerticalScroll>
            <ScrollButton aria-label="Scroll up"><Chevron dir="up" size={9} /></ScrollButton>
            <ScrollTrack><ScrollThumb $part={100} /></ScrollTrack>
            <ScrollButton aria-label="Scroll down"><Chevron size={9} /></ScrollButton>
        </VerticalScroll>
        <MapFooter>
            <ViewButton aria-label="Data view" $active><Glyph name="dataView" size={12} /></ViewButton>
            <ViewButton aria-label="Layout view"><Glyph name="layoutView" size={12} /></ViewButton>
            <Separator $wide />
            <ViewButton aria-label="Refresh"><Glyph name="refresh" size={12} /></ViewButton>
            <ViewButton aria-label="Pause drawing"><Glyph name="pause" size={12} /></ViewButton>
            <ScrollButton aria-label="Scroll left"><Chevron dir="left" size={9} /></ScrollButton>
            <ScrollTrack><ScrollThumb $part={100} /></ScrollTrack>
            <ScrollButton aria-label="Scroll right"><Chevron dir="right" size={9} /></ScrollButton>
        </MapFooter>
    </MapPanel>
);

const LayoutToolbar = () => (
    <BottomArea>
        <ToolbarStrip $dense>
            <Grip />
            <Tools items={['pageZoomIn', 'pageZoomOut', 'pagePan', 'pageWhole', 'page100', '||', 'pageIn', 'pageOut', '||', 'pageBack', 'pageForward']} />
            <ZoomCombo $width={55} $line="#c4c4c4">
                <select aria-label="Page zoom" defaultValue="100%"><option>100%</option></select>
                <Chevron color="#aaa" weight={1} />
            </ZoomCombo>
            <Tools items={['||', 'draft', 'focus', 'changeLayout', 'dataDriven']} muted="draft" />
            <Overflow space={4} />
        </ToolbarStrip>
    </BottomArea>
);

const LanguageTools = () => (
    <LanguageBar>
        <LanguageItem $gold>অ</LanguageItem>
        <LanguageItem $wide>
            <span>English</span>
            <Caret color="#fff" />
        </LanguageItem>
        <LanguageItem aria-label="Keyboard">
            <svg width="14" height="14" viewBox="0 0 14 14"><path d="M0 11c1-4 3-5 7-5s6 1 7 5z" fill="#eee" /></svg>
        </LanguageItem>
        <LanguageItem aria-label="Mouse">
            <svg width="12" height="14" viewBox="0 0 12 14"><path d="M4 0l1 3 2 0 1-3v6l3 8H1l3-8z" fill="#eee" /></svg>
        </LanguageItem>
        <LanguageItem aria-label="Settings">
            <svg width="14" height="14" viewBox="0 0 14 14"><circle cx="7" cy="7" r="4" fill="none" stroke="#e3e5e8" strokeWidth="2.500" /><circle cx="7" cy="7" r="6" fill="none" stroke="#e3e5e8" strokeWidth="1.500" strokeDasharray="2 1.800" /></svg>
        </LanguageItem>
        <LanguageItem aria-label="Web">
            <svg width="15" height="14" viewBox="0 0 15 14" fill="none"><path d="M3 7.500h9c0-6-8-6-9 0s6 6 8.500 2.500" stroke="#7fc4ee" strokeWidth="2.200" /><path d="M1 13C0 9 9 0 14 1" stroke="#f2dc8a" strokeWidth="1.200" /></svg>
        </LanguageItem>
        <LanguageItem aria-label="Help">
            <svg width="14" height="14" viewBox="0 0 14 14" fill="none"><circle cx="7" cy="7" r="6.200" fill="#7b8fc8" stroke="#b9c3e4" /><path d="M5 5.500c0-3 4-3 4 0 0 1.500-2 1.500-2 3M7 10v1.500" stroke="#fff" strokeWidth="1.400" /></svg>
        </LanguageItem>
        <LanguageItem aria-label="Exit">
            <svg width="13" height="13" viewBox="0 0 13 13" fill="none"><circle cx="6.500" cy="6.500" r="5.500" stroke="#fff" strokeWidth="1.300" /><path d="M6.500 4v5" stroke="#fff" strokeWidth="1.600" /></svg>
        </LanguageItem>
    </LanguageBar>
);

const SystemTaskbar = () => (
    <Taskbar>
        <TaskItem $system aria-label="Start"><TaskGlyph name="start" /></TaskItem>
        <TaskItem $system aria-label="Search"><TaskGlyph name="find" /></TaskItem>
        <TaskItem $system aria-label="Task view"><TaskGlyph name="views" /></TaskItem>
        <TaskList>
            {taskApps.map((name) => (
                <TaskItem key={name} aria-label={name} $open={name === 'arcmap'}><TaskGlyph name={name} /></TaskItem>
            ))}
        </TaskList>
        <Tray>
            <TrayItem aria-label="People" $width={36}>
                <svg width="12" height="16" viewBox="0 0 12 16" fill="none"><path d="M2 14c0-6 8-6 8 0M3 5a3 3 0 1 0 6 0a3 3 0 1 0-6 0" stroke="#fff" strokeWidth="1.300" /></svg>
            </TrayItem>
            <TrayItem aria-label="Hidden icons" $width={30}>
                <svg width="12" height="8" viewBox="0 0 12 8" fill="none"><path d="M1 7l5-5 5 5" stroke="#fff" strokeWidth="1.300" /></svg>
            </TrayItem>
            <TrayItem aria-label="Battery">
                <svg width="15" height="12" viewBox="0 0 15 12"><path d="M1 2.500h12v7H1z" fill="none" stroke="#fff" /><path d="M3 4h8v4H3z" fill="#fff" /></svg>
            </TrayItem>
            <TrayItem aria-label="Network">
                <svg width="13" height="14" viewBox="0 0 13 14" fill="none"><path d="M1 13C1 6 6 1 13 1M4 13c0-5 4-9 9-9M7 13c0-3 3-6 6-6" stroke="#ddd" strokeWidth="1.200" /><circle cx="11.500" cy="12" r="1.500" fill="#fff" /></svg>
            </TrayItem>
            <TrayItem aria-label="Volume">
                <svg width="16" height="14" viewBox="0 0 16 14" fill="none"><path d="M1 5h3l4-4v12L4 9H1z" stroke="#fff" /><path d="M10 5c1 1 1 3 0 4M12 3c2 2 2 6 0 8M14 1c3 3 3 9 0 12" stroke="#ddd" /></svg>
            </TrayItem>
            <Clock dateTime="2019-04-08">4/8/2019</Clock>
            <TrayItem aria-label="Notifications" $width={40}>
                <svg width="16" height="19" viewBox="0 0 16 19" fill="none"><path d="M1 3h14v11h-4l-3 4-3-4H1z" stroke="#fff" strokeWidth="1.300" /></svg>
            </TrayItem>
            <ShowDesktop aria-label="Show desktop" />
        </Tray>
    </Taskbar>
);

const App = () => (
    <Desktop>
        <GlobalStyle />
        <DesktopShortcut width="18" height="18" viewBox="0 0 18 18" aria-hidden="true">
            <circle cx="9" cy="9" r="9" fill="#c9503c" />
            <path d="M9 0c4 0 7 2 8 5l-8 4z" fill="#7f9e45" />
            <circle cx="9" cy="5" r="4" fill="#e8d9b0" />
        </DesktopShortcut>
        <AppWindow>
            <TitleBar>
                <Glyph name="arcmap" />
                <WindowTitle>Untitled - ArcMap</WindowTitle>
                <WindowButton aria-label="Minimize">
                    <svg width="10" height="10" viewBox="0 0 10 10"><path d="M0 5.500h10" stroke="#888" /></svg>
                </WindowButton>
                <WindowButton aria-label="Restore">
                    <svg width="10" height="10" viewBox="0 0 10 10" fill="none"><path d="M.5 2.500h7v7h-7zM2.500 2.500v-2h7v7h-2" stroke="#777" /></svg>
                </WindowButton>
                <WindowButton aria-label="Close window">
                    <svg width="10" height="10" viewBox="0 0 10 10"><path d="M0 0l10 10M10 0L0 10" stroke="#888" /></svg>
                </WindowButton>
            </TitleBar>
            <MenuBar>
                {menus.map((name) => <MenuButton key={name}>{name}</MenuButton>)}
            </MenuBar>
            <Toolbars />
            <Workspace>
                <TableOfContents />
                <MapView />
                <SideDock>
                    <SideTab><Glyph name="catalog" />Catalog</SideTab>
                    <SideTab $space={14}><Glyph name="search" />Search</SideTab>
                    <SideTab><Glyph name="createFeatures" />Create Features</SideTab>
                </SideDock>
            </Workspace>
            <LayoutToolbar />
        </AppWindow>
        <LanguageTools />
        <ClickHalo />
        <MouseCursor width="12" height="19" viewBox="0 0 12 19">
            <path d="M1 1v15l3.500-3.500L7 18l2.300-1L7 11.500h4.500z" fill="#fff" stroke="#111" />
        </MouseCursor>
        <SystemTaskbar />
    </Desktop>
);

export default App;
